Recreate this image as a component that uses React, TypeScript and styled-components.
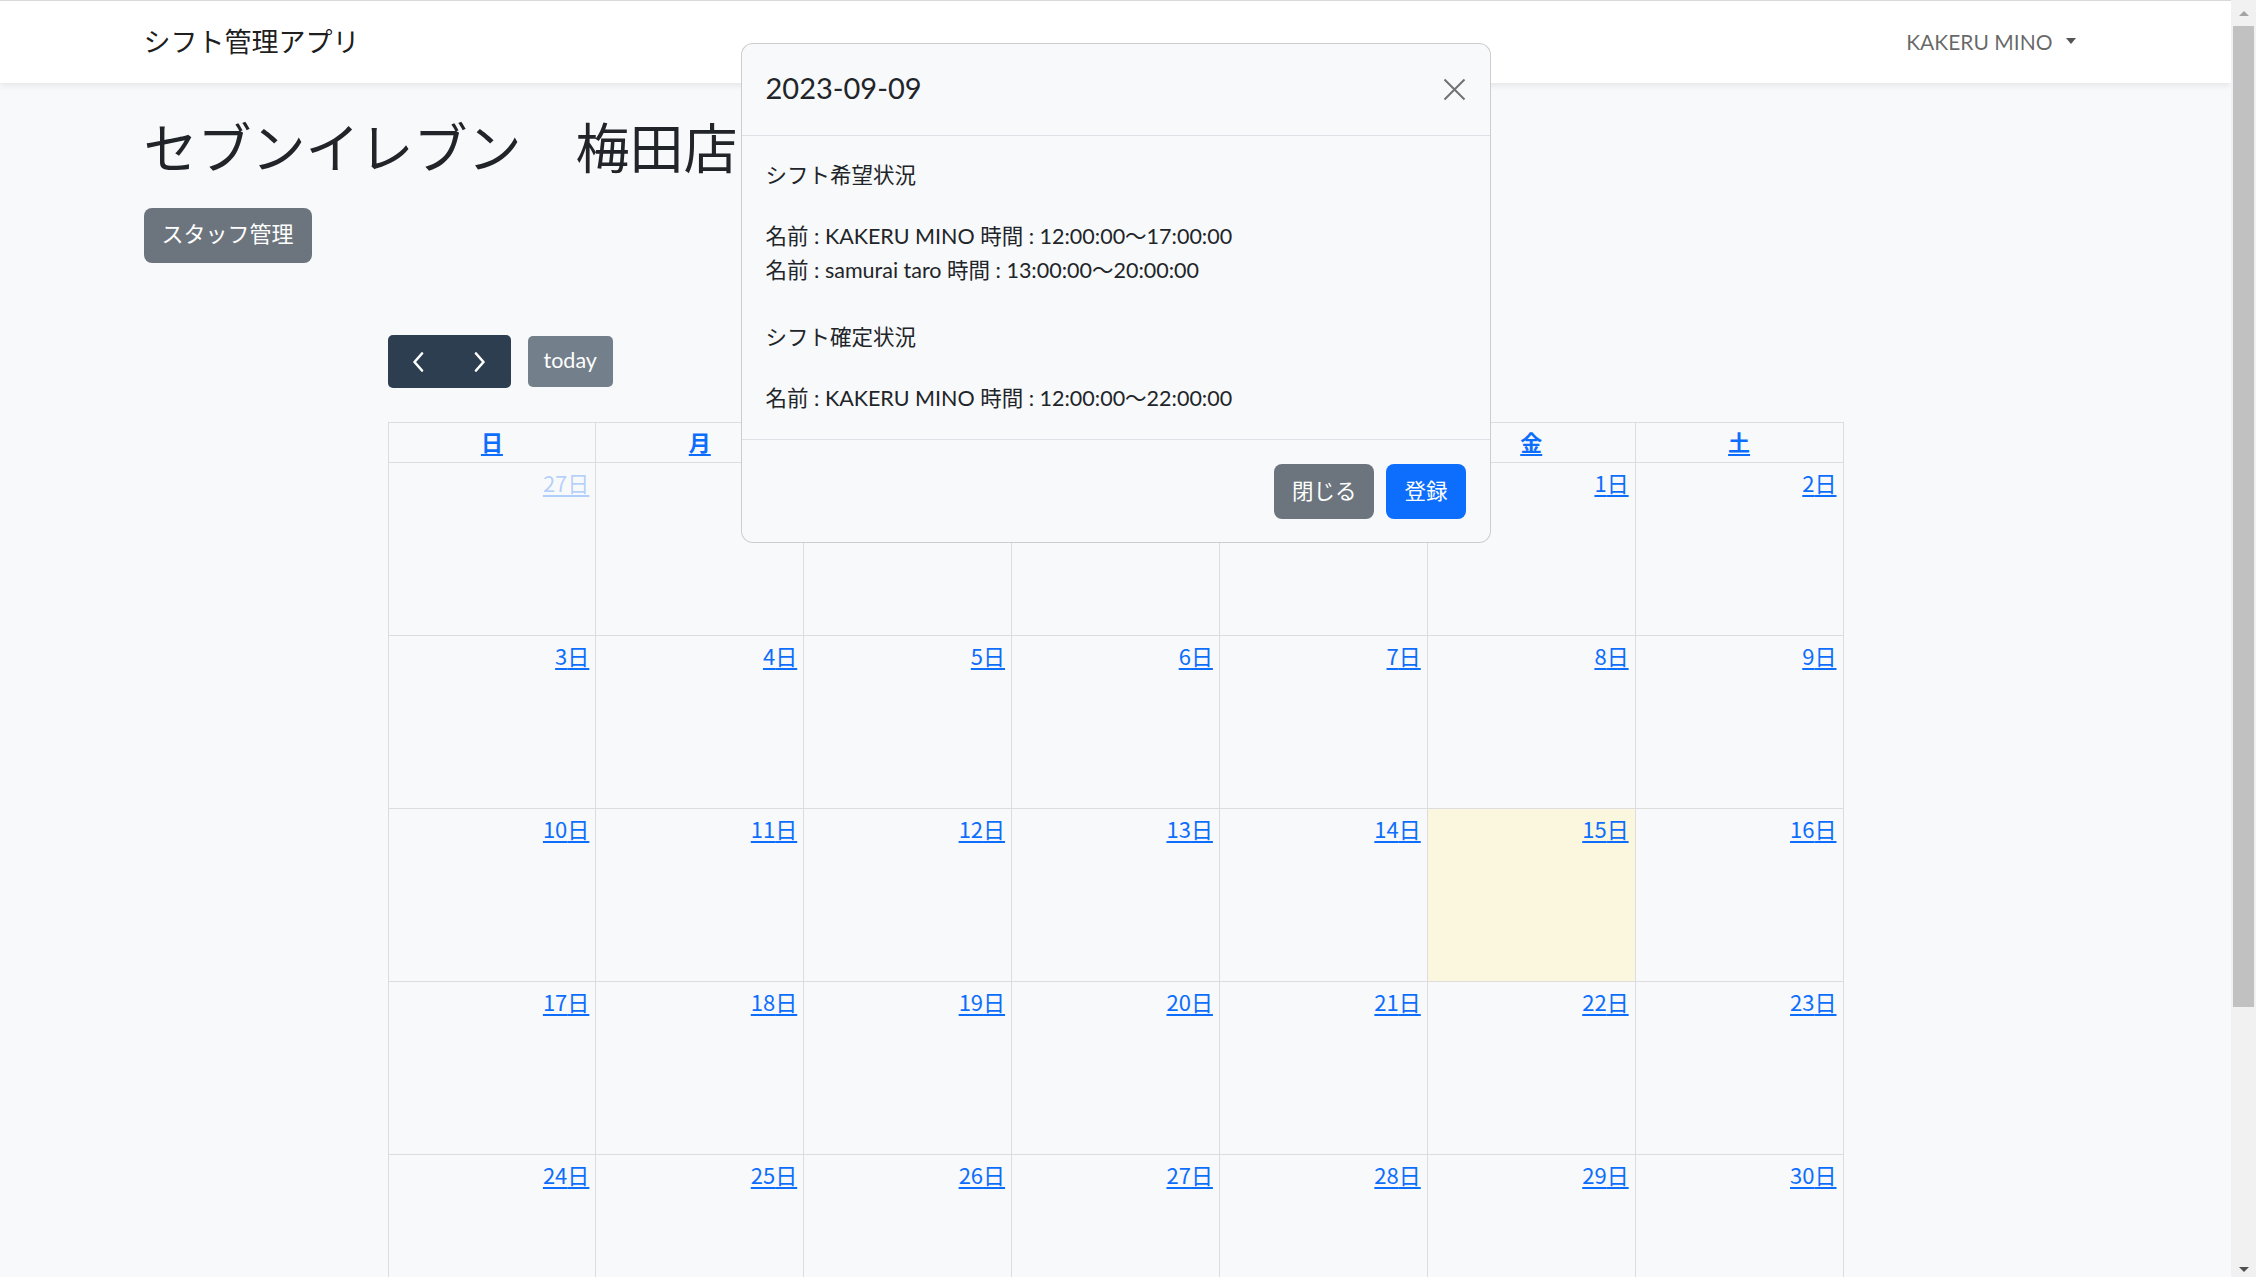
import React from 'react';
import styled, { createGlobalStyle } from 'styled-components';

const GlobalStyle = createGlobalStyle`
  html, body {
    margin: 0;
    padding: 0;
    background: #f8f9fa;
    overflow: hidden;
  }
  body {
    font-family: "Lato", "Noto Sans CJK JP", sans-serif;
    color: #212529;
  }
  *, *::before, *::after { box-sizing: border-box; }
`;

const JP = `"Noto Sans CJK JP", "Noto Sans", sans-serif`;
const MIXED = `"Lato", "Noto Sans CJK JP", sans-serif`;

const Shell = styled.div`
  display: flex;
  width: 2256px;
  height: 1277px;
  overflow: hidden;
`;

const Viewport = styled.div`
  position: relative;
  flex: 1;
  min-width: 0;
  height: 100%;
  overflow: hidden;
  background: #f8f9fa;
  border-top: 1px solid #d9d9d9;
`;

const Navbar = styled.header`
  position: relative;
  z-index: 1;
  height: 82px;
  background: #ffffff;
  box-shadow: 0 3px 6px rgba(0, 0, 0, 0.075);
`;

const Container = styled.div`
  width: 1944px;
  margin: 0 auto;
`;

const NavInner = styled(Container)`
  height: 100%;
  display: flex;
  align-items: center;
  justify-content: space-between;
  padding-bottom: 4px;
`;

const Brand = styled.a`
  font-family: ${JP};
  font-size: 27px;
  line-height: 1;
  color: rgba(0, 0, 0, 0.9);
  text-decoration: none;
`;

const UserToggle = styled.a`
  display: flex;
  align-items: center;
  gap: 13px;
  padding-right: 12px;
  padding-top: 2px;
  font-family: ${MIXED};
  font-size: 21px;
  line-height: 1;
  color: rgba(0, 0, 0, 0.6);
  text-decoration: none;
`;

const Caret = styled.span`
  width: 0;
  height: 0;
  border-top: 6px solid #555;
  border-left: 5.5px solid transparent;
  border-right: 5.5px solid transparent;
`;

const Main = styled(Container)`
  display: flex;
  flex-direction: column;
  align-items: flex-start;
`;

const Title = styled.h1`
  margin: 30px 0 30px;
  font-family: ${JP};
  font-weight: 400;
  font-size: 54px;
  line-height: 65px;
  color: #212529;
`;

const StaffButton = styled.button`
  height: 55px;
  padding: 0 18px 7px;
  border: none;
  border-radius: 8px;
  background: #6c757d;
  color: #ffffff;
  font-family: ${JP};
  font-size: 22px;
  line-height: 1;
  display: inline-flex;
  align-items: center;
`;

const CalendarSection = styled.section`
  width: 1456px;
  align-self: center;
  margin-top: 72px;
`;

const Toolbar = styled.div`
  display: flex;
  align-items: center;
  gap: 17px;
  height: 53px;
  margin-bottom: 34px;
`;

const NavGroup = styled.div`
  display: flex;
  height: 53px;
  border-radius: 5px;
  background: #2c3e50;
  overflow: hidden;
`;

const NavButton = styled.button`
  width: 61.5px;
  height: 100%;
  border: none;
  background: transparent;
  display: flex;
  align-items: center;
  justify-content: center;
  padding: 0;
`;

const TodayButton = styled.button`
  height: 51px;
  padding: 0 16px 1px;
  border: none;
  border-radius: 5px;
  background: #737f8b;
  color: #ffffff;
  font-family: ${MIXED};
  font-size: 21.5px;
  line-height: 1;
`;

const CalendarGrid = styled.div`
  display: grid;
  grid-template-columns: repeat(7, 1fr);
  border-top: 1px solid #dddddd;
  border-left: 1px solid #dddddd;
`;

const HeadCell = styled.div`
  height: 40px;
  padding-bottom: 4px;
  border-right: 1px solid #dddddd;
  border-bottom: 1px solid #dddddd;
  display: flex;
  align-items: center;
  justify-content: center;
`;

const HeadLink = styled.a`
  font-family: ${JP};
  font-weight: 700;
  font-size: 22px;
  line-height: 30px;
  color: #0d6efd;
  text-decoration: underline;
  text-underline-offset: 3px;
`;

const DayCell = styled.div<{ $today?: boolean }>`
  height: 173px;
  padding: 3px 6px;
  border-right: 1px solid #dddddd;
  border-bottom: 1px solid #dddddd;
  background: ${(p) => (p.$today ? '#fbf6de' : 'transparent')};
  text-align: right;
`;

const DayNumber = styled.a<{ $other?: boolean }>`
  font-family: ${JP};
  font-size: 22px;
  line-height: 33px;
  color: ${(p) => (p.$other ? 'rgba(13, 110, 253, 0.3)' : '#0d6efd')};
  text-decoration: underline;
  text-underline-offset: 3px;
`;

const Overlay = styled.div`
  position: absolute;
  inset: 0;
  z-index: 10;
  display: flex;
  justify-content: center;
  align-items: flex-start;
  padding-top: 42px;
`;

const Dialog = styled.section`
  width: 750px;
  background: #f8f9fa;
  border: 1px solid rgba(0, 0, 0, 0.175);
  border-radius: 12px;
  overflow: hidden;
`;

const ModalHeader = styled.div`
  height: 92px;
  padding: 0 24px;
  display: flex;
  align-items: center;
  justify-content: space-between;
  border-bottom: 1px solid #dee2e6;
`;

const ModalTitle = styled.h5`
  margin: 0;
  padding-bottom: 4px;
  font-family: ${MIXED};
  font-weight: 400;
  font-size: 29px;
  line-height: 1.5;
  color: #212529;
`;

const CloseButton = styled.button`
  width: 23px;
  height: 23px;
  padding: 0;
  border: none;
  background: transparent;
  display: flex;
`;

const ModalBody = styled.div`
  padding: 24px 24px 24px;
  font-family: ${MIXED};
  font-size: 21.5px;
  line-height: 34px;
  color: #212529;
`;

const SectionTitle = styled.p`
  margin: 0 0 25px;
  height: 34px;
  padding-bottom: 6px;
  font-family: ${JP};
  font-size: 21.5px;
  line-height: 28px;
`;

const EntryList = styled.div<{ $last?: boolean }>`
  margin-bottom: ${(p) => (p.$last ? '0' : '35px')};
`;

const Entry = styled.div`
  white-space: nowrap;
  height: 34px;
`;

const ModalFooter = styled.div`
  display: flex;
  justify-content: flex-end;
  gap: 12px;
  padding: 24px 24px 23px;
  border-top: 1px solid #dee2e6;
`;

const FooterButton = styled.button<{ $variant: 'secondary' | 'primary' }>`
  height: 55px;
  padding: 0 18px 4px;
  border: none;
  border-radius: 8px;
  background: ${(p) => (p.$variant === 'primary' ? '#0d6efd' : '#6c757d')};
  color: #ffffff;
  font-family: ${JP};
  font-size: 21.5px;
  line-height: 1;
`;

const Scrollbar = styled.div`
  width: 25px;
  height: 100%;
  background: #f1f1f1;
  display: flex;
  flex-direction: column;
  align-items: center;
`;

const ScrollArrow = styled.div<{ $dir: 'up' | 'down' }>`
  height: 26px;
  width: 100%;
  display: flex;
  justify-content: center;
  align-items: ${(p) => (p.$dir === 'up' ? 'flex-start' : 'flex-end')};
  padding: ${(p) => (p.$dir === 'up' ? '11px 0 0' : '0 0 5px')};
  &::before {
    content: '';
    width: 0;
    height: 0;
    border-left: 5.5px solid transparent;
    border-right: 5.5px solid transparent;
    ${(p) =>
      p.$dir === 'up'
        ? 'border-bottom: 5px solid #a3a3a3;'
        : 'border-top: 5px solid #505050;'}
  }
`;

const ScrollThumb = styled.div`
  width: 21px;
  height: 981px;
  background: #c1c1c1;
`;

const ScrollSpacer = styled.div`
  flex: 1;
`;

const Chevron = ({ dir }: { dir: 'left' | 'right' }) => (
  <svg width="12" height="20" viewBox="0 0 12 20" aria-hidden>
    <path
      d={dir === 'left' ? 'M10 1.5 L2.5 10 L10 18.5' : 'M2 1.5 L9.5 10 L2 18.5'}
      fill="none"
      stroke="#ffffff"
      strokeWidth="2.6"
      strokeLinecap="round"
      strokeLinejoin="round"
    />
  </svg>
);

const CloseIcon = () => (
  <svg width="23" height="23" viewBox="0 0 23 23" aria-hidden>
    <path d="M1.5 1.5 L21.5 21.5 M21.5 1.5 L1.5 21.5" stroke="#727272" strokeWidth="2" fill="none" />
  </svg>
);

const WEEKDAYS = ['日', '月', '火', '水', '木', '金', '土'];

type Day = { n: number; other: boolean; today?: boolean };

const buildWeeks = (): Day[][] => {
  const days: Day[] = [];
  [27, 28, 29, 30, 31].forEach((n) => days.push({ n, other: true }));
  for (let n = 1; n <= 30; n++) days.push({ n, other: false, today: n === 15 });
  const weeks: Day[][] = [];
  for (let i = 0; i < days.length; i += 7) weeks.push(days.slice(i, i + 7));
  return weeks;
};

const weeks = buildWeeks();

export default function App() {
  return (
    <>
      <GlobalStyle />
      <Shell>
        <Viewport>
          <Navbar>
            <NavInner>
              <Brand href="#">シフト管理アプリ</Brand>
              <UserToggle href="#">
                KAKERU MINO
                <Caret />
              </UserToggle>
            </NavInner>
          </Navbar>

          <Main>
            <Title>セブンイレブン　梅田店</Title>
            <StaffButton>スタッフ管理</StaffButton>

            <CalendarSection>
              <Toolbar>
                <NavGroup>
                  <NavButton aria-label="prev">
                    <Chevron dir="left" />
                  </NavButton>
                  <NavButton aria-label="next">
                    <Chevron dir="right" />
                  </NavButton>
                </NavGroup>
                <TodayButton>today</TodayButton>
              </Toolbar>

              <CalendarGrid>
                {WEEKDAYS.map((w) => (
                  <HeadCell key={w}>
                    <HeadLink href="#">{w}</HeadLink>
                  </HeadCell>
                ))}
                {weeks.map((week, wi) =>
                  week.map((d, di) => (
                    <DayCell key={`${wi}-${di}`} $today={d.today}>
                      <DayNumber href="#" $other={d.other}>
                        {d.n}日
                      </DayNumber>
                    </DayCell>
                  ))
                )}
              </CalendarGrid>
            </CalendarSection>
          </Main>

          <Overlay>
            <Dialog>
              <ModalHeader>
                <ModalTitle>2023-09-09</ModalTitle>
                <CloseButton aria-label="close">
                  <CloseIcon />
                </CloseButton>
              </ModalHeader>
              <ModalBody>
                <SectionTitle>シフト希望状況</SectionTitle>
                <EntryList>
                  <Entry>名前 : KAKERU MINO 時間 : 12:00:00～17:00:00</Entry>
                  <Entry>名前 : samurai taro 時間 : 13:00:00～20:00:00</Entry>
                </EntryList>
                <SectionTitle>シフト確定状況</SectionTitle>
                <EntryList $last>
                  <Entry>名前 : KAKERU MINO 時間 : 12:00:00～22:00:00</Entry>
                </EntryList>
              </ModalBody>
              <ModalFooter>
                <FooterButton $variant="secondary">閉じる</FooterButton>
                <FooterButton $variant="primary">登録</FooterButton>
              </ModalFooter>
            </Dialog>
          </Overlay>
        </Viewport>

        <Scrollbar>
          <ScrollArrow $dir="up" />
          <ScrollThumb />
          <ScrollSpacer />
          <ScrollArrow $dir="down" />
        </Scrollbar>
      </Shell>
    </>
  );
}
